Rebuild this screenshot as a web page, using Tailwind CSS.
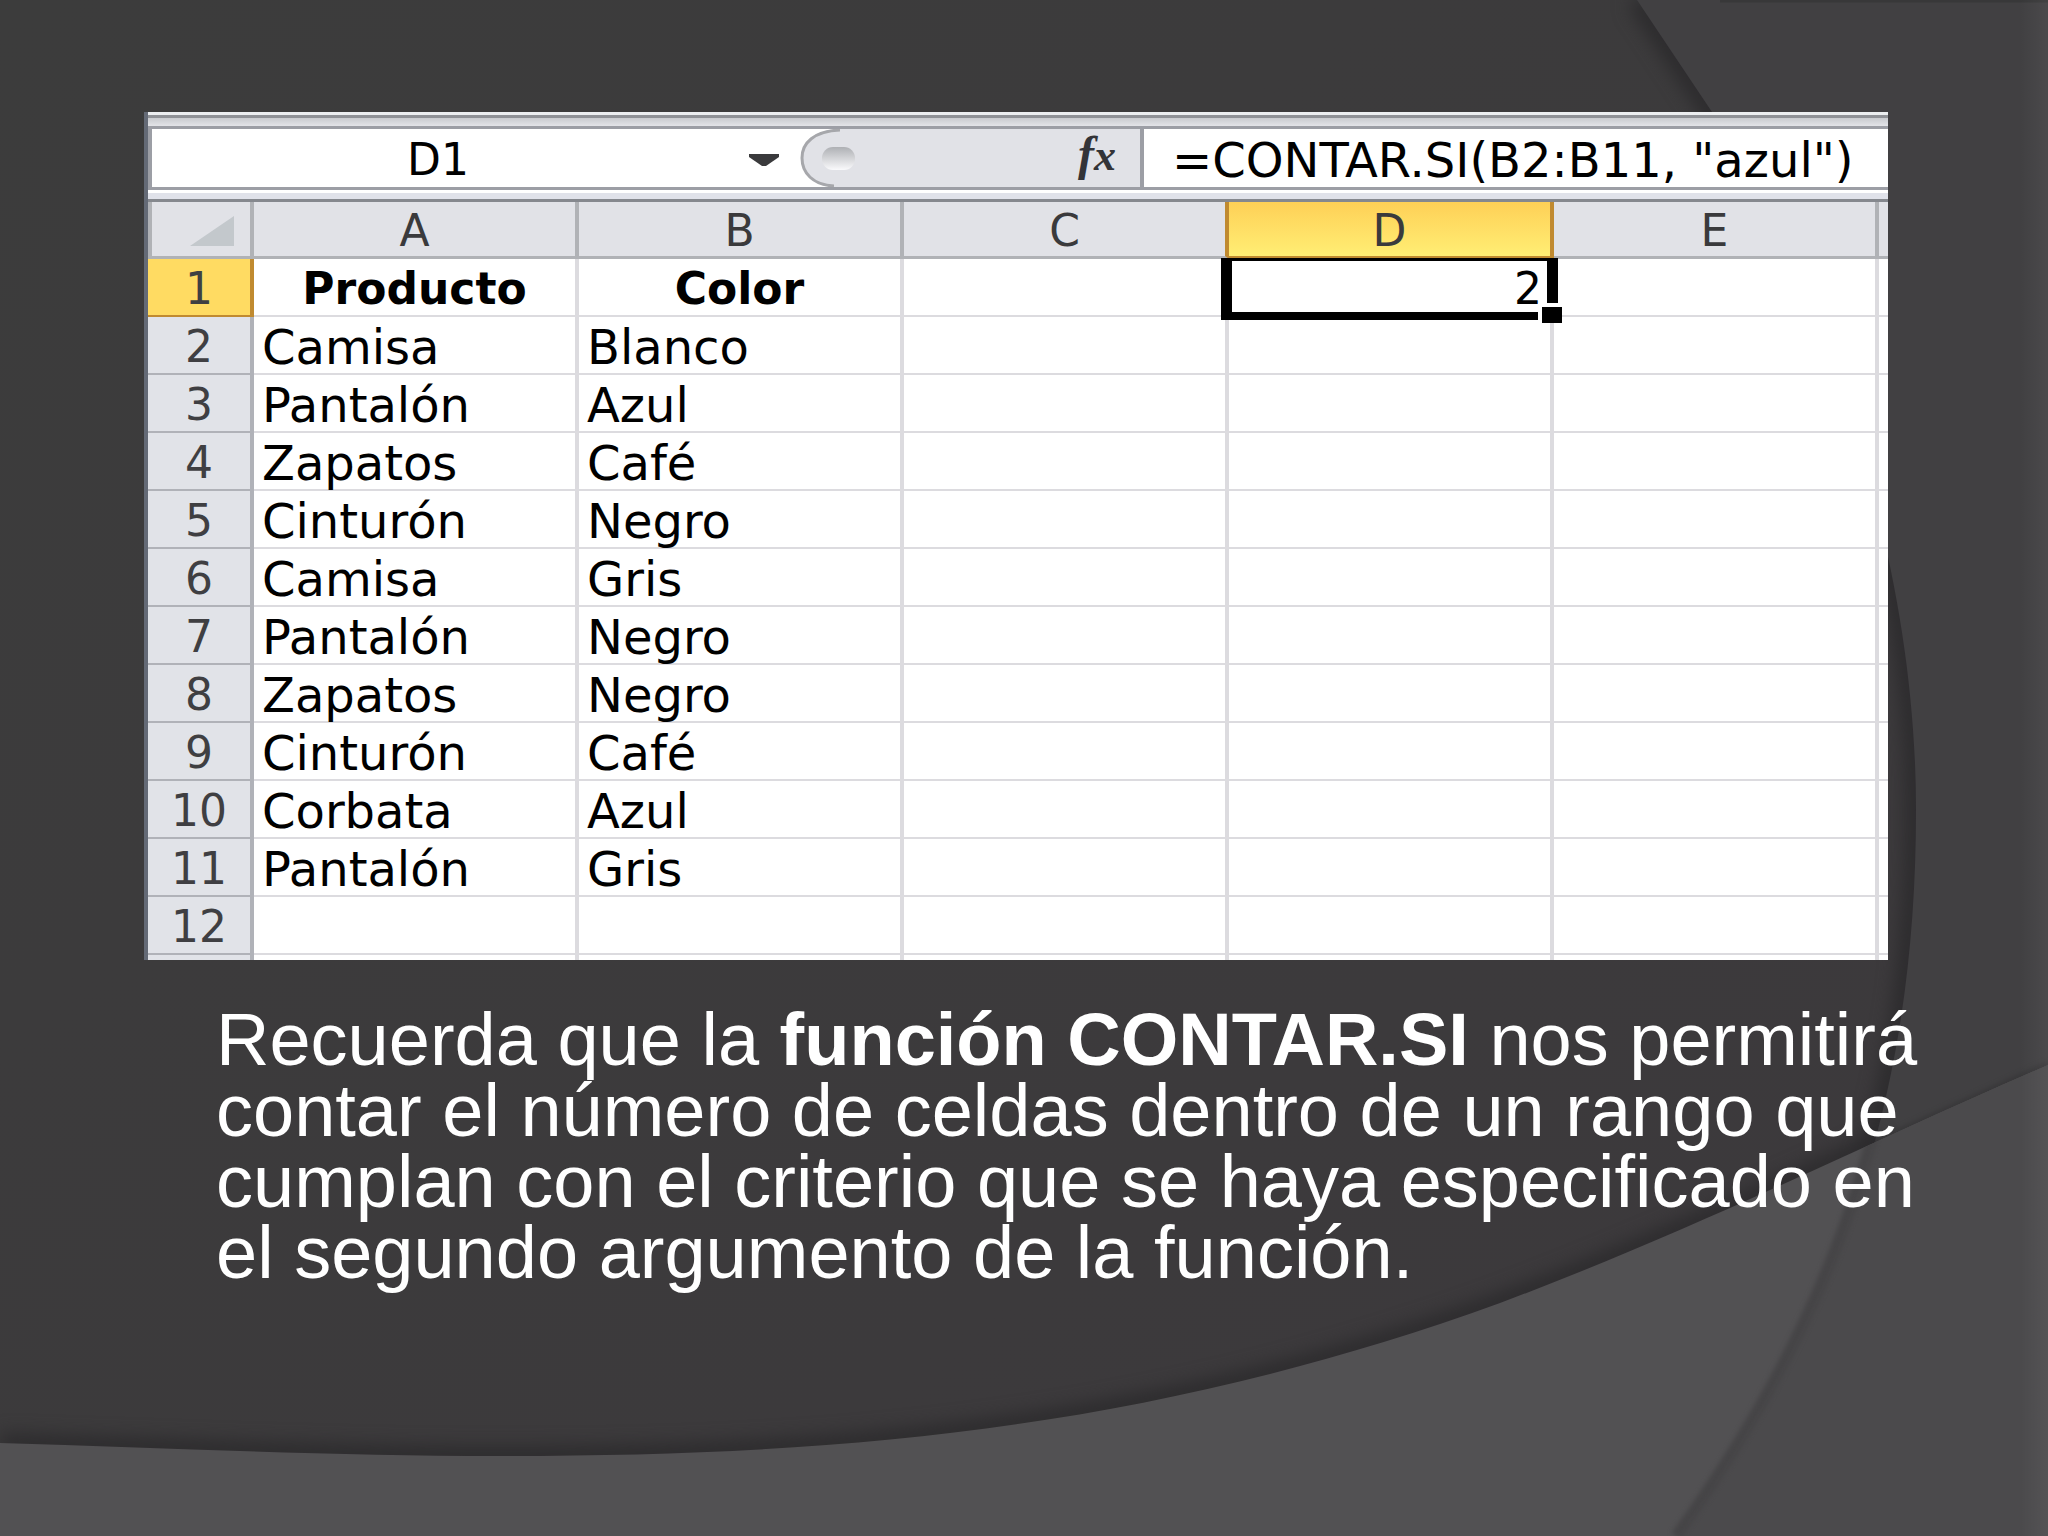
<!DOCTYPE html>
<html lang="es">
<head>
    <meta charset="UTF-8">
    <meta name="viewport" content="width=device-width, initial-scale=1.0">
    <title>Función CONTAR.SI</title>
    <script src="https://cdn.jsdelivr.net/npm/@tailwindcss/browser@4"></script>
</head>
<body class="relative min-h-screen overflow-x-hidden bg-[#3c3b3d] text-white">

    <!-- slide background -->
    <svg class="absolute inset-0 w-full h-full" viewBox="0 0 2048 1536" preserveAspectRatio="none" aria-hidden="true">
        <defs>
            <filter id="soft" x="-20%" y="-20%" width="140%" height="140%" color-interpolation-filters="sRGB"><feGaussianBlur stdDeviation="9" /></filter>
            <filter id="thin" x="-20%" y="-20%" width="140%" height="140%" color-interpolation-filters="sRGB"><feGaussianBlur stdDeviation="2" /></filter>
            <linearGradient id="base" x1="0" y1="0" x2="1" y2="1">
                <stop offset="0" stop-color="#3c3c3c" /><stop offset="1" stop-color="#3c393c" />
            </linearGradient>
            <linearGradient id="edge" x1="0" x2="1">
                <stop offset="0" stop-color="#fff" stop-opacity="0" /><stop offset="1" stop-color="#fff" stop-opacity=".05" />
            </linearGradient>
            <clipPath id="bottom">
                <path d="M0 1443C170 1448 330 1456 500 1456C840 1456 1150 1430 1500 1303C1700 1228 1880 1137 2048 1065V1536H0Z" />
            </clipPath>
        </defs>
        <rect width="2048" height="1536" fill="url(#base)" />
        <path d="M1637 0L1712 112C1800 260 1916 520 1916 810C1916 1080 1850 1300 1680 1536" fill="none" stroke="#2b2a2c" stroke-width="20" filter="url(#soft)" />
        <path d="M1637 0L1712 112C1800 260 1916 520 1916 810C1916 1080 1850 1300 1680 1536H2048V0Z" fill="#414042" />
        <path d="M1720 1H2048" stroke="#383839" stroke-width="3" />
        <path d="M0 1443C170 1448 330 1456 500 1456C840 1456 1150 1430 1500 1303C1650 1247 1780 1186 1880 1141" fill="none" stroke="#2b2a2c" stroke-width="18" filter="url(#soft)" />
        <path d="M1880 1141L2048 1065" stroke="#39383a" stroke-width="8" filter="url(#thin)" />
        <g clip-path="url(#bottom)">
            <rect width="2048" height="1536" fill="#525153" />
            <path d="M1637 0L1712 112C1800 260 1916 520 1916 810C1916 1080 1850 1300 1680 1536H2048V0Z" fill="#4b4a4c" />
            <path d="M1912 810C1912 1080 1846 1300 1676 1536" fill="none" stroke="#464547" stroke-width="11" filter="url(#thin)" />
        </g>
        <rect x="2020" width="28" height="1536" fill="url(#edge)" />
    </svg>

    <main class="relative pt-28 pl-36 pr-40 pb-16">

        <section class="h-[848px] overflow-hidden border-l-4 border-[#646a76] bg-white text-black font-['DejaVu_Sans','Verdana',sans-serif] text-[44px] leading-[50px]">
            <div class="h-[3px] bg-[#eceef0]"></div>
            <div class="h-[3px] bg-[#8f9196]"></div>
            <div class="h-2 bg-linear-to-b from-[#c9cbcf] to-[#e3e4e8]"></div>

            <!-- formula bar -->
            <div class="flex h-16 border-y-3 border-l-4 border-[#9c9ea5] bg-[#e1e2e7]">
                <div class="flex w-[648px] bg-white">
                    <input type="text" value="D1" aria-label="Cuadro de nombres" class="w-[572px] min-w-0 pt-1 text-center">
                    <button type="button" aria-label="Lista de nombres" class="flex-1 pl-6 pt-1">
                        <svg class="w-8 h-3" viewBox="0 0 32 12"><path d="M1 0H31V3L18 12H14L1 3Z" fill="#3a3a3c" /></svg>
                    </button>
                </div>
                <div class="flex flex-1 justify-between min-w-[340px] max-w-[340px] bg-[#e1e2e7] pr-6">
                    <svg class="w-16 h-[58px]" viewBox="0 0 64 58">
                        <defs>
                            <linearGradient id="knob" x1="0" y1="0" x2="0" y2="1"><stop offset="0" stop-color="#aeb0b4" /><stop offset="1" stop-color="#fafafc" /></linearGradient>
                        </defs>
                        <path d="M0 0H36C13 2 2 14 2 29S13 56 34 58H0Z" fill="#fff" />
                        <path d="M40 1C14 2 2 14 2 29S13 56 34 57" fill="none" stroke="#a6a7ab" stroke-width="3" />
                        <rect x="22" y="18" width="33" height="23" rx="11" fill="url(#knob)" />
                    </svg>
                    <button type="button" aria-label="Insertar función" class="font-['Liberation_Serif','Times_New_Roman',serif] text-[48px] font-bold italic text-[#333438] leading-none pb-2">f<span class="text-[44px]">x</span></button>
                </div>
                <input type="text" value='=CONTAR.SI(B2:B11, "azul")' aria-label="Barra de fórmulas" class="flex-1 min-w-0 border-l-4 border-[#9c9ea5] bg-white pl-7 pt-1 text-[48px]">
            </div>
            <div class="h-[3px] bg-white"></div>
            <div class="h-[6px] bg-[#e0e2ea]"></div>
            <div class="h-[3px] bg-[#85888e]"></div>

            <table class="w-full table-fixed border-separate border-spacing-0 [&_th]:font-normal [&_tr]:h-[58px] [&_td]:border-r-4 [&_td]:border-b-2 [&_td]:border-[#dcdbdf] [&_td]:px-2 [&_td]:pt-1 [&_td]:pb-0 [&_tbody_th]:border-r-4 [&_tbody_th]:border-b-2 [&_tbody_th]:border-[#b0b2b8] [&_tbody_th]:bg-[#e1e3e8] [&_tbody_th]:text-[#3f3f42] [&_tbody_th]:pt-1 [&_thead_th]:border-r-4 [&_thead_th]:border-b-3 [&_thead_th]:border-[#b0b2b6] [&_thead_th]:text-[#3a3a3c] [&_thead_th]:pt-1">
                <colgroup>
                    <col class="w-[106px]"><col class="w-[325px]"><col class="w-[325px]"><col class="w-[325px]"><col class="w-[325px]"><col class="w-[325px]"><col>
                </colgroup>
                <thead class="bg-[#e1e2e7]">
                    <tr class="h-[57px]!">
                        <th class="border-l-4" aria-label="Seleccionar todo"><svg class="ml-auto mr-4 w-[44px] h-[30px]" viewBox="0 0 44 30"><path d="M44 0V30H0Z" fill="#c3c8cc" /></svg></th>
                        <th scope="col">A</th>
                        <th scope="col">B</th>
                        <th scope="col" class="border-r-[#c08a30]!">C</th>
                        <th scope="col" class="border-[#c08a30]! bg-linear-to-b from-[#fed056] to-[#ffee74]">D</th>
                        <th scope="col">E</th>
                        <th class="border-r-0!"></th>
                    </tr>
                </thead>
                <tbody class="[&_td]:text-[48px]">
                    <tr class="[&_td]:text-[44px]!">
                        <th scope="row" class="border-[#c08a30]! bg-[#ffdb62]!">1</th>
                        <td class="text-center font-bold">Producto</td><td class="text-center font-bold">Color</td><td></td>
                        <td class="relative text-right">2
                            <div class="absolute -top-px -left-2 -right-2 -bottom-[5px] border-x-[11px] border-t-3 border-b-8 border-black"></div>
                            <div class="absolute -right-3 -bottom-2 w-6 h-[20px] border-l-4 border-t-4 border-white bg-black"></div>
                        </td>
                        <td></td><td class="border-r-0! px-0!"></td>
                    </tr>
                    <tr><th scope="row">2</th><td>Camisa</td><td>Blanco</td><td></td><td></td><td></td><td class="border-r-0! px-0!"></td></tr>
                    <tr><th scope="row">3</th><td>Pantalón</td><td>Azul</td><td></td><td></td><td></td><td class="border-r-0! px-0!"></td></tr>
                    <tr><th scope="row">4</th><td>Zapatos</td><td>Café</td><td></td><td></td><td></td><td class="border-r-0! px-0!"></td></tr>
                    <tr><th scope="row">5</th><td>Cinturón</td><td>Negro</td><td></td><td></td><td></td><td class="border-r-0! px-0!"></td></tr>
                    <tr><th scope="row">6</th><td>Camisa</td><td>Gris</td><td></td><td></td><td></td><td class="border-r-0! px-0!"></td></tr>
                    <tr><th scope="row">7</th><td>Pantalón</td><td>Negro</td><td></td><td></td><td></td><td class="border-r-0! px-0!"></td></tr>
                    <tr><th scope="row">8</th><td>Zapatos</td><td>Negro</td><td></td><td></td><td></td><td class="border-r-0! px-0!"></td></tr>
                    <tr><th scope="row">9</th><td>Cinturón</td><td>Café</td><td></td><td></td><td></td><td class="border-r-0! px-0!"></td></tr>
                    <tr><th scope="row">10</th><td>Corbata</td><td>Azul</td><td></td><td></td><td></td><td class="border-r-0! px-0!"></td></tr>
                    <tr><th scope="row">11</th><td>Pantalón</td><td>Gris</td><td></td><td></td><td></td><td class="border-r-0! px-0!"></td></tr>
                    <tr><th scope="row">12</th><td></td><td></td><td></td><td></td><td></td><td class="border-r-0! px-0!"></td></tr>
                    <tr><th></th><td></td><td></td><td></td><td></td><td></td><td class="border-r-0! px-0!"></td></tr>
                </tbody>
            </table>
        </section>

        <p class="mt-11 pl-[72px] whitespace-nowrap font-['Liberation_Sans','Arial',sans-serif] text-[74px] leading-[71px]">
            Recuerda que la <strong>función CONTAR.SI</strong> nos permitirá<br>
            contar el número de celdas dentro de un rango que<br>
            cumplan con el criterio que se haya especificado en<br>
            el segundo argumento de la función.
        </p>
    </main>

</body>
</html>
